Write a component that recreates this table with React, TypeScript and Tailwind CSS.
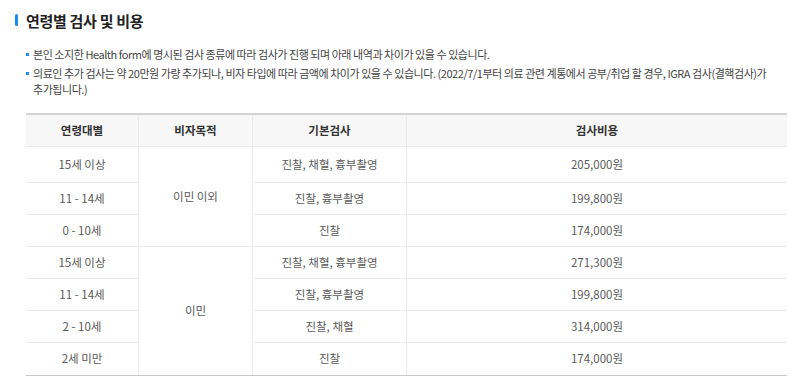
import React from "react";

const rows1 = [
  { age: "15세 이상", exam: "진찰, 채혈, 흉부촬영", cost: "205,000원", h: "h-[36px]" },
  { age: "11 - 14세", exam: "진찰, 흉부촬영", cost: "199,800원", h: "h-[32px]" },
  { age: "0 - 10세", exam: "진찰", cost: "174,000원", h: "h-[31px]" },
];
const rows2 = [
  { age: "15세 이상", exam: "진찰, 채혈, 흉부촬영", cost: "271,300원", h: "h-[32px]" },
  { age: "11 - 14세", exam: "진찰, 흉부촬영", cost: "199,800원", h: "h-[32px]" },
  { age: "2 - 10세", exam: "진찰, 채혈", cost: "314,000원", h: "h-[32px]" },
  { age: "2세 미만", exam: "진찰", cost: "174,000원", h: "h-[32px]" },
];

function Group({ rows, visa, last }: { rows: typeof rows1; visa: string; last?: boolean }) {
  return (
    <div className={`grid grid-cols-[113px_114px_154px_1fr] ${last ? "" : "border-b border-[#ebebeb]"}`}>
      <div className="flex flex-col">
        {rows.map((r, i) => (
          <div
            key={i}
            className={`${r.h} flex items-center justify-center border-r border-[#ebebeb] ${i < rows.length - 1 ? "border-b border-[#ebebeb]" : ""}`}
          >
            {r.age}
          </div>
        ))}
      </div>
      <div className="flex items-center justify-center border-r border-[#ebebeb]">{visa}</div>
      <div className="flex flex-col">
        {rows.map((r, i) => (
          <div
            key={i}
            className={`${r.h} flex items-center justify-center border-r border-[#ebebeb] ${i < rows.length - 1 ? "border-b border-[#ebebeb]" : ""}`}
          >
            {r.exam}
          </div>
        ))}
      </div>
      <div className="flex flex-col">
        {rows.map((r, i) => (
          <div
            key={i}
            className={`${r.h} flex items-center justify-center ${i < rows.length - 1 ? "border-b border-[#ebebeb]" : ""}`}
          >
            {r.cost}
          </div>
        ))}
      </div>
    </div>
  );
}

export default function App() {
  return (
    <div
      className="w-[800px] h-[388px] bg-white overflow-hidden"
      style={{ fontFamily: '"Noto Sans CJK KR", "Noto Sans", sans-serif' }}
    >
      <div className="flex items-center pl-[15px] pt-[10px] h-[30px]">
        <span className="w-[3px] h-[12px] rounded-full bg-[#1a8cf0] mr-[8px]" />
        <h2 className="text-[15px] font-bold text-[#222] leading-none tracking-[-0.3px]">연령별 검사 및 비용</h2>
      </div>
      <ul className="mt-[16px] pl-[26px] pr-[13px] text-[11px] text-[#444] tracking-[-0.45px] break-keep">
        <li className="flex leading-[16px]">
          <span className="w-[3px] h-[3px] bg-[#1a8cf0] mt-[7px] mr-[4px] shrink-0" />
          <span>본인 소지한 Health form에 명시된 검사 종류에 따라 검사가 진행 되며 아래 내역과 차이가 있을 수 있습니다.</span>
        </li>
        <li className="flex leading-[16px] mt-[3px]">
          <span className="w-[3px] h-[3px] bg-[#1a8cf0] mt-[7px] mr-[4px] shrink-0" />
          <span className="w-[740px]">
            의료인 추가 검사는 약 20만원 가량 추가되나, 비자 타입에 따라 금액에 차이가 있을 수 있습니다. (2022/7/1부터 의료 관련 계통에서 공부/취업 할 경우, IGRA 검사(결핵검사)가 추가됩니다.)
          </span>
        </li>
      </ul>
      <div className="ml-[26px] w-[761px] mt-[16px] border-t-2 border-[#d4d4d4] border-b border-b-[#c8c8c8] text-[11.5px] text-[#5a5a5a]">
        <div className="grid grid-cols-[113px_114px_154px_1fr] h-[32px] bg-[#f7f7f7] border-b border-[#ebebeb] font-bold text-[#333]">
          <div className="flex items-center justify-center border-r border-[#ebebeb]">연령대별</div>
          <div className="flex items-center justify-center border-r border-[#ebebeb]">비자목적</div>
          <div className="flex items-center justify-center border-r border-[#ebebeb]">기본검사</div>
          <div className="flex items-center justify-center">검사비용</div>
        </div>
        <Group rows={rows1} visa="이민 이외" />
        <Group rows={rows2} visa="이민" last />
      </div>
    </div>
  );
}
